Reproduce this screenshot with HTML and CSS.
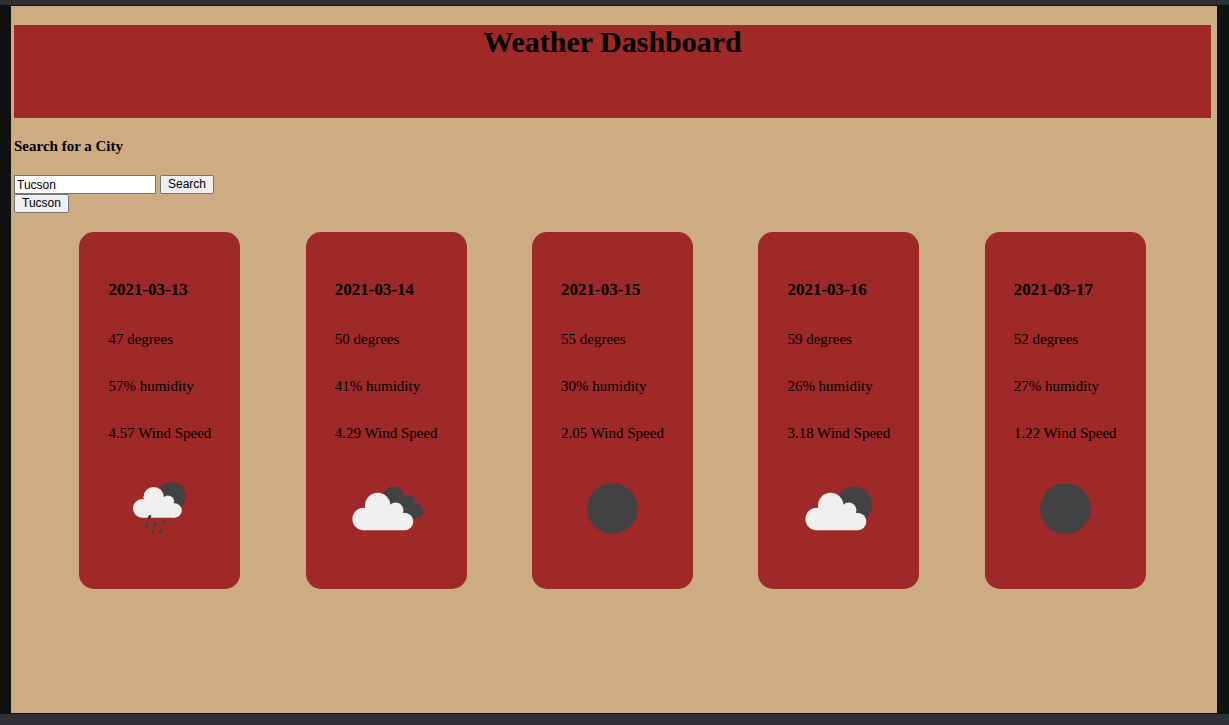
FILE: index.html
```
<!DOCTYPE html>
<html lang="en">
<head>
<meta charset="utf-8">
<title>Weather Dashboard</title>
<link rel="stylesheet" href="styles.css">
</head>
<body>
<div class="page">
  <header class="banner"><h1 class="title">Weather Dashboard</h1></header>
  <main>
    <form class="search">
      <h2 class="search-title"><label for="city">Search for a City</label></h2>
      <div class="search-row">
        <input class="city" id="city" type="text" value="Tucson">
        <button class="button" type="submit">Search</button>
      </div>
      <button class="button" type="button">Tucson</button>
    </form>
    <section class="forecast">
      <article class="card">
        <h3 class="date">2021-03-13</h3>
        <p class="fact">47 degrees</p>
        <p class="fact">57% humidity</p>
        <p class="fact">4.57 Wind Speed</p>
        <svg class="icon" viewBox="-2 7 100 71" aria-hidden="true">
          <circle class="dark" cx="62" cy="31.3" r="14"/>
          <g class="light">
            <circle cx="32.300" cy="43.400" r="9.300"/>
            <circle cx="43.700" cy="32.300" r="10.300"/>
            <circle cx="58" cy="36.500" r="6.100"/>
            <circle cx="64.600" cy="45.500" r="7.200"/>
            <path d="M32.300 52.700H64.600L60 37L44 33L34 38Z"/>
          </g>
          <path class="drops" d="M39.800 51.500l-.5 1.200M37.200 59.500l-1 2.200M45.500 58.500l-1.100 2.300M55 56.500l-.8 1.200M43 65.800l-.6.700M51.600 65.200l-.9 2"/>
        </svg>
      </article>
      <article class="card">
        <h3 class="date">2021-03-14</h3>
        <p class="fact">50 degrees</p>
        <p class="fact">41% humidity</p>
        <p class="fact">4.29 Wind Speed</p>
        <svg class="icon" viewBox="-6 7 100 71" aria-hidden="true">
          <g class="dark">
            <circle cx="52.500" cy="32.200" r="10.700"/>
            <circle cx="68" cy="36" r="6"/>
            <circle cx="74.800" cy="46.200" r="7.500"/>
            <path d="M52 33L62 32L70 36L75 53.600L60 53Z"/>
          </g>
          <g class="light" id="cloud">
            <circle cx="22.700" cy="54" r="11.300"/>
            <circle cx="36.700" cy="40.400" r="12.700"/>
            <circle cx="54.700" cy="45.300" r="7.700"/>
            <circle cx="63.500" cy="56.500" r="8.800"/>
            <path d="M22.700 65.300H63.500L56 46L38 40L26 46Z"/>
          </g>
        </svg>
      </article>
      <article class="card">
        <h3 class="date">2021-03-15</h3>
        <p class="fact">55 degrees</p>
        <p class="fact">30% humidity</p>
        <p class="fact">2.05 Wind Speed</p>
        <svg class="icon" viewBox="-8 7 100 71" aria-hidden="true"><circle class="dark" cx="43.500" cy="43.500" r="25.300"/></svg>
      </article>
      <article class="card">
        <h3 class="date">2021-03-16</h3>
        <p class="fact">59 degrees</p>
        <p class="fact">26% humidity</p>
        <p class="fact">3.18 Wind Speed</p>
        <svg class="icon" viewBox="-7 7 100 71" aria-hidden="true">
          <circle class="dark" cx="60" cy="39.500" r="18"/>
          <use href="#cloud"/>
        </svg>
      </article>
      <article class="card">
        <h3 class="date">2021-03-17</h3>
        <p class="fact">52 degrees</p>
        <p class="fact">27% humidity</p>
        <p class="fact">1.22 Wind Speed</p>
        <svg class="icon" viewBox="-8 7 100 71" aria-hidden="true"><circle class="dark" cx="43.500" cy="43.500" r="25.300"/></svg>
      </article>
    </section>
  </main>
</div>
</body>
</html>
```
FILE: styles.css
```
* { box-sizing: border-box; }

body {
  display: flex;
  min-height: 100vh;
  margin: 0;
  padding: 5px 0 11px;
  background: #2f3033;
  color: #000;
  font: 15px/17px "Liberation Serif", "Times New Roman", serif;
}

.page {
  flex: 1;
  padding: 19px 6px 18px 3px;
  background: #cdac82;
  border: solid #111;
  border-width: 1px 12px 1px 11px;
}

.banner {
  height: 93px;
  background: #9e2928;
  text-align: center;
}

.title {
  margin: 0;
  font-size: 30px;
  line-height: 34px;
}

.search {
  padding: 20px 0 19px;
}

.search-title {
  margin: 0 0 20px;
  font-size: 15px;
  line-height: 17px;
}

.search-row {
  display: flex;
  gap: 4px;
}

.city,
.button {
  display: block;
  height: 19px;
  color: #000;
  font: 12px/15px "Liberation Sans", Arial, sans-serif;
  border: 1px solid #767676;
}

.city {
  width: 142px;
  padding: 1px 2px;
  background: #fff;
}

.button {
  padding: 1px 7px;
  background: #efefef;
  border-radius: 2px;
}

.forecast {
  display: flex;
  justify-content: space-evenly;
}

.card {
  padding: 48px 29px 46px;
  background: #9e2928;
  border-radius: 15px;
}

.date {
  margin: 0 0 31px;
  font-size: 17px;
  line-height: 20px;
}

.fact {
  margin: 0 0 30px;
  line-height: 17px;
}

.icon {
  display: block;
  width: 100px;
  height: 71px;
}

.dark { fill: #424143; }

.light { fill: #efefed; }

.drops {
  fill: none;
  stroke: #424143;
  stroke-width: 3;
  stroke-linecap: round;
}
```
